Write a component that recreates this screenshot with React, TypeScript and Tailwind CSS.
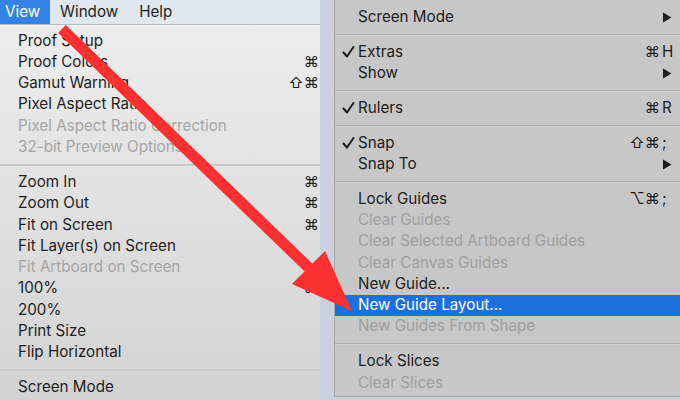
import React from 'react';

interface MenuItem {
  label?: string;
  mods?: string;
  keyName?: string;
  disabled?: boolean;
  checked?: boolean;
  submenu?: boolean;
  active?: boolean;
  sep?: boolean;
}

// the left menu is cut off at its right edge, so only the modifier glyphs show
const viewItems: MenuItem[] = [
  { label: 'Proof Setup' },
  { label: 'Proof Colors', mods: '⌘' },
  { label: 'Gamut Warning', mods: '⇧⌘' },
  { label: 'Pixel Aspect Ratio' },
  { label: 'Pixel Aspect Ratio Correction', disabled: true },
  { label: '32-bit Preview Options...', disabled: true },
  { sep: true },
  { label: 'Zoom In', mods: '⌘' },
  { label: 'Zoom Out', mods: '⌘' },
  { label: 'Fit on Screen', mods: '⌘' },
  { label: 'Fit Layer(s) on Screen' },
  { label: 'Fit Artboard on Screen', disabled: true },
  { label: '100%', mods: '⌘' },
  { label: '200%' },
  { label: 'Print Size' },
  { label: 'Flip Horizontal' },
  { sep: true },
  { label: 'Screen Mode' },
];

const subItems: MenuItem[] = [
  { label: 'Screen Mode', submenu: true },
  { sep: true },
  { label: 'Extras', checked: true, mods: '⌘', keyName: 'H' },
  { label: 'Show', submenu: true },
  { sep: true },
  { label: 'Rulers', checked: true, mods: '⌘', keyName: 'R' },
  { sep: true },
  { label: 'Snap', checked: true, mods: '⇧⌘', keyName: ';' },
  { label: 'Snap To', submenu: true },
  { sep: true },
  { label: 'Lock Guides', mods: '⌥⌘', keyName: ';' },
  { label: 'Clear Guides', disabled: true },
  { label: 'Clear Selected Artboard Guides', disabled: true },
  { label: 'Clear Canvas Guides', disabled: true },
  { label: 'New Guide...' },
  { label: 'New Guide Layout...', active: true },
  { label: 'New Guides From Shape', disabled: true },
  { sep: true },
  { label: 'Lock Slices' },
  { label: 'Clear Slices', disabled: true },
];

const Check = () => (
  <svg width="13" height="12" viewBox="0 0 13 12">
    <path d="M1.5 6.5 L5 10.5 L11.5 1" fill="none" stroke="#1d1d1d" strokeWidth="2" strokeLinecap="round" strokeLinejoin="round" />
  </svg>
);

const SubArrow = () => (
  <svg width="10" height="11" viewBox="0 0 10 11">
    <path d="M1 0.5 L9.5 5.5 L1 10.5 Z" fill="#1d1d1d" />
  </svg>
);

const LeftMenu: React.FC = () => (
  <div className="w-[320px] h-full flex flex-col overflow-hidden shrink-0">
    {/* menu bar */}
    <div className="h-[25px] shrink-0 flex items-center bg-[#dfe6ec] border-b border-[#b8bdc2] text-[#1e1e1e]">
      <div className="h-full w-[50px] flex items-center pl-[5px] bg-[#3483e4] text-white">View</div>
      <div className="ml-[10px]">Window</div>
      <div className="ml-[21px]">Help</div>
    </div>
    <div className="flex-1 flex flex-col pt-[5.5px] bg-gradient-to-b from-[#ededed] to-[#d3d3d3]">
      {viewItems.map((item, i) =>
        item.sep ? (
          <div key={i} className="h-[14px] shrink-0 flex items-center">
            <div className="w-full h-[2px] bg-[#c9c9c9]" />
          </div>
        ) : (
          <div key={i} className="h-[21.25px] shrink-0 flex items-center pl-[18px] pr-[1px]">
            <span className={`flex-1 whitespace-nowrap ${item.disabled ? 'text-[#a6a6a6]' : 'text-[#1e1e1e]'}`}>{item.label}</span>
            <span className="text-right text-[#1e1e1e]">{item.mods}</span>
          </div>
        )
      )}
    </div>
  </div>
);

const SubMenu: React.FC = () => (
  <div className="flex-1 h-[397px] flex flex-col pt-[6.5px] bg-[#c7c7c7] border-l border-b border-[#a6a6a6]">
    {subItems.map((item, i) =>
      item.sep ? (
        <div key={i} className="h-[13.7px] shrink-0 flex flex-col justify-center">
          <div className="h-[1px] bg-[#adadad]" />
          <div className="h-[1px] bg-[#d2d2d2]" />
        </div>
      ) : (
        <div
          key={i}
          className={`h-[21.25px] shrink-0 flex items-center ${item.active ? 'bg-[#1c6fdc] text-white' : item.disabled ? 'text-[#a0a0a0]' : 'text-[#1d1d1d]'}`}
        >
          <span className="w-[23px] pl-[7px] flex items-center">{item.checked && <Check />}</span>
          <span className="flex-1 whitespace-nowrap">{item.label}</span>
          {item.submenu ? (
            <span className="w-[18px] flex items-center"><SubArrow /></span>
          ) : (
            <>
              <span className="text-right">{item.mods}</span>
              <span className="w-[20px] pl-[2px]">{item.keyName}</span>
            </>
          )}
        </div>
      )
    )}
  </div>
);

export default function App() {
  return (
    <div className="relative w-[680px] h-[400px] overflow-hidden flex bg-[#c9d2dc] text-[15.2px] font-[Inter,'Liberation_Sans','DejaVu_Sans',sans-serif]">
      <LeftMenu />
      <div className="w-[14px] shrink-0" />
      <SubMenu />
      {/* red pointer arrow */}
      <svg className="absolute inset-0 pointer-events-none" width="680" height="400" viewBox="0 0 680 400">
        <line x1="62" y1="29" x2="310" y2="269" stroke="#fc3030" strokeWidth="11" />
        <polygon points="292,284 325,251 352,311" fill="#fc3030" />
      </svg>
    </div>
  );
}
